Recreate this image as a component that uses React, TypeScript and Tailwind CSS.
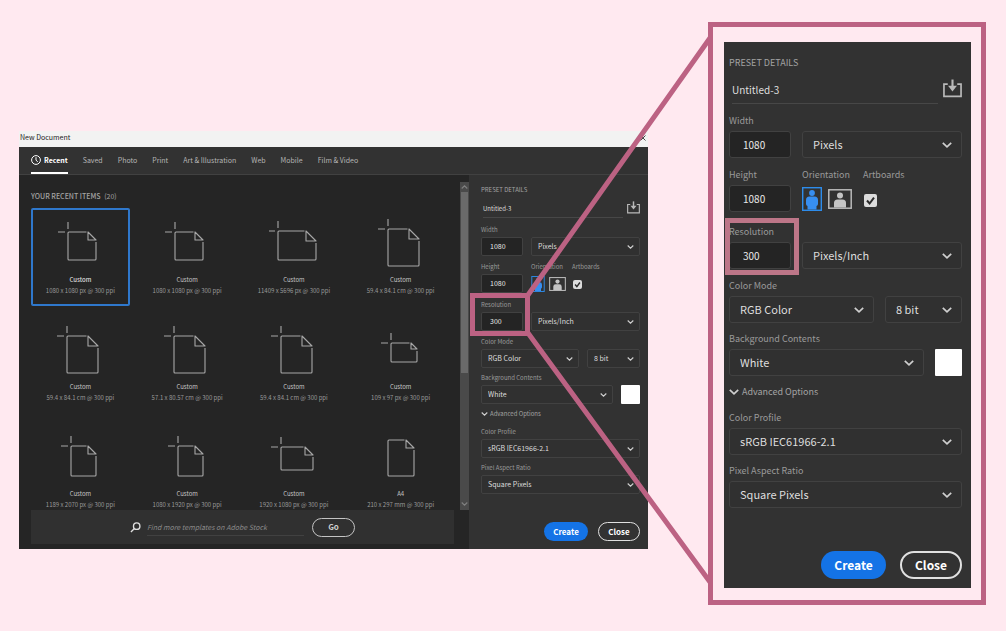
import type { ReactNode } from "react";

type Size = "sm" | "lg";

const tabs = ["Saved", "Photo", "Print", "Art & Illustration", "Web", "Mobile", "Film & Video"];

// x/y/w/h describe the page outline inside a 50x50 icon box
const items = [
  { name: "Custom", dims: "1080 x 1080 px @ 300 ppi", x: 13, y: 14, w: 28, h: 28, fold: 8 },
  { name: "Custom", dims: "1080 x 1080 px @ 300 ppi", x: 13, y: 14, w: 28, h: 28, fold: 8 },
  { name: "Custom", dims: "11409 x 5696 px @ 300 ppi", x: 9, y: 13, w: 38, h: 29, fold: 10 },
  { name: "Custom", dims: "59.4 x 84.1 cm @ 300 ppi", x: 12, y: 11, w: 31, h: 37, fold: 10 },
  { name: "Custom", dims: "59.4 x 84.1 cm @ 300 ppi", x: 12, y: 11, w: 31, h: 37, fold: 10 },
  { name: "Custom", dims: "57.1 x 80.57 cm @ 300 ppi", x: 12, y: 11, w: 31, h: 37, fold: 10 },
  { name: "Custom", dims: "59.4 x 84.1 cm @ 300 ppi", x: 12, y: 11, w: 31, h: 37, fold: 10 },
  { name: "Custom", dims: "109 x 97 px @ 300 ppi", x: 15, y: 18, w: 26, h: 19, fold: 6 },
  { name: "Custom", dims: "1189 x 2070 px @ 300 ppi", x: 16, y: 14, w: 25, h: 30, fold: 8 },
  { name: "Custom", dims: "1080 x 1920 px @ 300 ppi", x: 16, y: 14, w: 25, h: 30, fold: 8 },
  { name: "Custom", dims: "1920 x 1080 px @ 300 ppi", x: 12, y: 15, w: 32, h: 23, fold: 8 },
  { name: "A4", dims: "210 x 297 mm @ 300 ppi", x: 12, y: 8, w: 26, h: 36, fold: 8, plain: true },
];

function PageIcon({ x, y, w, h, fold, plain }: { x: number; y: number; w: number; h: number; fold: number; plain?: boolean }) {
  const r = x + w;
  const b = y + h;
  const f = r - fold;
  return (
    <svg viewBox="0 0 50 50" className="size-[50px]" fill="none" stroke="#a8a8a8" strokeWidth="1.1" strokeLinejoin="round" aria-hidden="true">
      <path d={`M${f - 1.5} ${y}H${x + 1}Q${x} ${y} ${x} ${y + 1}V${b - 1}Q${x} ${b} ${x + 1} ${b}H${r - 1}Q${r} ${b} ${r} ${b - 1}V${y + fold + 2}`} />
      <path d={`M${f} ${y}V${y + fold}H${r}Z`} />
      {!plain && <path d={`M${x} ${y - 10}v7M${x - 10} ${y}h7`} />}
    </svg>
  );
}

function Chevron({ size }: { size: Size }) {
  return (
    <svg viewBox="0 0 10 6" className={size === "lg" ? "h-[6px] w-[10px]" : "h-[4px] w-[7px]"} fill="none" stroke="#cfcfcf" strokeWidth="1.7" aria-hidden="true">
      <path d="M.8 .8 5 4.8 9.2 .8" />
    </svg>
  );
}

function SaveIcon({ size }: { size: Size }) {
  return (
    <svg viewBox="0 0 18 18" className={size === "lg" ? "size-[19px]" : "size-[13px]"} fill="none" stroke="#b9b9b9" strokeWidth="1.6" aria-hidden="true">
      <path d="M4.500 4.800H.9V16.500H17.100V4.800H13.500" />
      <path d="M9 .5V8" strokeWidth="2" />
      <path d="M4.800 6.500h8.400L9 11.800Z" fill="#b9b9b9" stroke="none" />
    </svg>
  );
}

function Portrait({ size }: { size: Size }) {
  return (
    <svg viewBox="0 0 20 24" className={size === "lg" ? "h-[24px] w-[20px]" : "h-[16px] w-[14px]"} aria-hidden="true">
      <rect x=".7" y=".7" width="18.600" height="22.600" fill="none" stroke="#2d8ceb" strokeWidth="1.400" />
      <circle cx="10" cy="6" r="2.900" fill="#378ef0" />
      <path d="M7.500 9.500h5q3.500 0 3.500 3.500v4q0 1.500-1.500 2v3.500h-9V19Q4 18.500 4 17v-4q0-3.500 3.500-3.500Z" fill="#378ef0" />
    </svg>
  );
}

function Landscape({ size }: { size: Size }) {
  return (
    <svg viewBox="0 0 24 20" className={size === "lg" ? "h-[20px] w-[24px]" : "h-[14px] w-[17px]"} aria-hidden="true">
      <rect x=".8" y=".8" width="22.400" height="18.400" fill="none" stroke="#b9b9b9" strokeWidth="1.500" />
      <circle cx="12" cy="6.500" r="3" fill="#c4c4c4" />
      <path d="M9.500 10.500h5q3.500 0 3.500 3.500V18.500H6V14q0-3.500 3.500-3.500Z" fill="#c4c4c4" />
    </svg>
  );
}

function Label({ size, htmlFor, children }: { size: Size; htmlFor?: string; children: ReactNode }) {
  return (
    <label
      htmlFor={htmlFor}
      className={`block whitespace-nowrap text-[#9a9a9a] ${size === "lg" ? "mb-[3px] h-4 text-[9px] leading-[18px]" : "mb-[2px] h-3 text-[6px] leading-[14px]"}`}
    >
      {children}
    </label>
  );
}

function NumberField({ id, size, value }: { id: string; size: Size; value: string }) {
  return (
    <input
      id={id}
      defaultValue={value}
      className={`block border border-[#414141] bg-[#242424] text-[#e8e8e8] outline-none ${
        size === "lg" ? "h-[27px] w-[62px] rounded-[3px] pb-px pl-[13px] text-[10px]" : "h-[19px] w-[42px] rounded-[2px] pb-px pl-2 text-[7px]"
      }`}
    />
  );
}

function SelectField({ id, label, size, value }: { id: string; label?: string; size: Size; value: string }) {
  return (
    <div className="relative min-w-0 flex-1">
      <select
        id={id}
        aria-label={label}
        className={`block w-full appearance-none border border-[#414141] bg-[#303030] text-[#dedede] outline-none ${
          size === "lg" ? "h-[27px] rounded-[3px] pl-[10px] text-[11px]" : "h-[19px] rounded-[2px] pl-[6px] text-[7px]"
        }`}
      >
        <option>{value}</option>
      </select>
      <span className={`pointer-events-none absolute inset-y-0 flex items-center ${size === "lg" ? "right-[10px]" : "right-[6px]"}`}>
        <Chevron size={size} />
      </span>
    </div>
  );
}

function PresetDetails({ size }: { size: Size }) {
  const lg = size === "lg";
  const id = (name: string) => `${size}-${name}`;
  const group = lg ? "mt-2" : "mt-1";
  const row = lg ? "flex items-end gap-[11px]" : "flex items-end gap-2";

  return (
    <form className={`bg-[#323232] ${lg ? "pt-3 pr-[9px] pb-[9px] pl-[5px]" : "pt-2 pr-2 pb-2 pl-3"}`} onSubmit={(e) => e.preventDefault()}>
      <h2 className={`text-[#a3a3a3] ${lg ? "h-4 text-[9px] leading-[18px]" : "h-3 text-[6px] leading-[14px]"}`}>PRESET DETAILS</h2>

      <div className={`flex items-start ${lg ? "mt-[6px] ml-[3px] gap-[5px]" : "mt-[5px] ml-[2px] gap-1"}`}>
        <input
          aria-label="Document name"
          defaultValue="Untitled-3"
          className={`min-w-0 flex-1 border-b border-[#474747] text-[#dedede] outline-none ${lg ? "h-7 pb-px text-[10px]" : "h-[18px] pb-px text-[6px]"}`}
        />
        <button type="button" aria-label="Save preset" className={lg ? "pt-[3px]" : "pt-px"}>
          <SaveIcon size={size} />
        </button>
      </div>

      <div className={`${lg ? "mt-2" : "mt-[5px]"} ${row}`}>
        <div>
          <Label size={size} htmlFor={id("width")}>Width</Label>
          <NumberField id={id("width")} size={size} value="1080" />
        </div>
        <SelectField id={id("unit")} label="Width unit" size={size} value="Pixels" />
      </div>

      <div className={`${group} flex ${lg ? "gap-[11px]" : "gap-2"}`}>
        <div>
          <Label size={size} htmlFor={id("height")}>Height</Label>
          <NumberField id={id("height")} size={size} value="1080" />
        </div>
        <div className={lg ? "w-[50px]" : "w-[33px]"}>
          <Label size={size}>Orientation</Label>
          <div className={`flex items-center ${lg ? "h-[27px] gap-[6px]" : "h-[19px] gap-1"}`}>
            <button type="button" aria-label="Portrait" aria-pressed="true"><Portrait size={size} /></button>
            <button type="button" aria-label="Landscape" aria-pressed="false"><Landscape size={size} /></button>
          </div>
        </div>
        <div>
          <Label size={size} htmlFor={id("artboards")}>Artboards</Label>
          <div className={`flex items-center ${lg ? "h-[27px] pt-1 pl-px" : "h-[19px] pt-px pl-px"}`}>
            <span className={`relative ${lg ? "size-[13px]" : "size-[9px]"}`}>
              <input id={id("artboards")} type="checkbox" defaultChecked className="peer block size-full appearance-none rounded-[2px] bg-[#dcdcdc]" />
              <svg viewBox="0 0 13 13" className="pointer-events-none absolute inset-0 hidden size-full peer-checked:block" fill="none" stroke="#2a2a2a" strokeWidth="2" aria-hidden="true">
                <path d="M3 6.500 5.600 9.500 10 3.600" />
              </svg>
            </span>
          </div>
        </div>
      </div>

      <div className={`${lg ? "mt-[11px]" : "mt-[5px]"} ${row}`}>
        <div className="relative">
          <Label size={size} htmlFor={id("resolution")}>Resolution</Label>
          <NumberField id={id("resolution")} size={size} value="300" />
          <span
            className={`pointer-events-none absolute border-[5px] ${
              lg ? "-top-[5px] -left-1 h-[57px] w-[74px] border-[#bd7688]" : "-top-[5px] -left-[11px] h-[43px] w-[60px] border-[#bc6283]"
            }`}
          />
        </div>
        <SelectField id={id("resolution-unit")} label="Resolution unit" size={size} value="Pixels/Inch" />
      </div>

      <div className={group}>
        <Label size={size} htmlFor={id("mode")}>Color Mode</Label>
        <div className={row}>
          <SelectField id={id("mode")} size={size} value="RGB Color" />
          <div className={`flex ${lg ? "w-[77px]" : "w-[53px]"}`}>
            <SelectField id={id("depth")} label="Bit depth" size={size} value="8 bit" />
          </div>
        </div>
      </div>

      <div className={lg ? "mt-[7px]" : "mt-[3px]"}>
        <Label size={size} htmlFor={id("background")}>Background Contents</Label>
        <div className={row}>
          <SelectField id={id("background")} size={size} value="White" />
          <button type="button" aria-label="Background color" className={`rounded-[1px] bg-white ${lg ? "size-[27px]" : "size-[19px]"}`} />
        </div>
      </div>

      <button
        type="button"
        className={`${group} flex items-center text-[#a3a3a3] ${lg ? "h-4 gap-[3px] text-[9px] leading-4" : "h-3 gap-[2px] text-[6px] leading-3"}`}
      >
        <Chevron size={size} />
        Advanced Options
      </button>

      <div className={lg ? "mt-[9px]" : "mt-[5px]"}>
        <Label size={size} htmlFor={id("profile")}>Color Profile</Label>
        <SelectField id={id("profile")} size={size} value="sRGB IEC61966-2.1" />
      </div>

      <div className={lg ? "mt-[7px]" : "mt-[3px]"}>
        <Label size={size} htmlFor={id("ratio")}>Pixel Aspect Ratio</Label>
        <SelectField id={id("ratio")} size={size} value="Square Pixels" />
      </div>

      <div className={`flex justify-end font-bold text-white ${lg ? "mt-[43px] gap-[14px] text-[12px]" : "mt-7 gap-[10px] text-[8px]"}`}>
        <button type="submit" className={`rounded-full bg-[#1473e6] ${lg ? "h-7 w-[65px]" : "h-[19px] w-[44px]"}`}>Create</button>
        <button type="button" className={`rounded-full border-[#e0e0e0] ${lg ? "h-7 w-[62px] border-2" : "h-[19px] w-[42px] border"}`}>Close</button>
      </div>
    </form>
  );
}

function RecentItems() {
  return (
    <section className="flex min-w-0 flex-1 flex-col bg-[#252525]">
      <div className="flex h-[335px] overflow-hidden">
        <div className="min-w-0 flex-1 pt-[15px] pr-[10px] pl-3">
          <h2 className="text-[7px] leading-3 font-medium text-[#a3a3a3]">
            YOUR RECENT ITEMS <span className="ml-[2px] font-normal">(20)</span>
          </h2>
          <div className="mt-[6px] grid grid-cols-4 gap-x-2 gap-y-[9px]">
            {items.map((item, i) => (
              <button
                key={i}
                className={`flex h-[98px] flex-col items-center rounded-[2px] border-2 pt-2 whitespace-nowrap ${i === 0 ? "border-[#2f78cc]" : "border-transparent"}`}
              >
                <PageIcon {...item} />
                <span className={`mt-[7px] text-[6px] leading-[10px] ${i === 0 ? "font-medium text-[#dedede]" : "text-[#c4c4c4]"}`}>{item.name}</span>
                <span className="text-[6px] leading-3 text-[#9a9a9a]">{item.dims}</span>
              </button>
            ))}
          </div>
        </div>
        <div className="mt-[7px] flex w-[9px] flex-col items-center bg-[#4a4a4a]">
          <span className="flex h-[10px] rotate-180 items-center opacity-40"><Chevron size="sm" /></span>
          <span className="h-[181px] w-[7px] bg-[#6a6a6a]" />
          <span className="mt-auto flex h-[12px] items-center opacity-40"><Chevron size="sm" /></span>
        </div>
      </div>
      <form className="mr-[15px] mb-[5px] ml-3 flex h-[34px] items-center justify-center bg-[#303030]" onSubmit={(e) => e.preventDefault()}>
        <svg viewBox="0 0 12 12" className="size-[11px]" fill="none" stroke="#e0e0e0" strokeWidth="1.5" aria-hidden="true">
          <circle cx="7.300" cy="4.500" r="3.500" />
          <path d="M4.800 7.200 1 11" />
        </svg>
        <input
          aria-label="Find more templates on Adobe Stock"
          placeholder="Find more templates on Adobe Stock"
          className="ml-[6px] h-[18px] w-[157px] border-b border-[#414141] text-[7px] italic outline-none placeholder:text-[#8a8a8a]"
        />
        <button className="ml-2 h-[19px] w-[43px] rounded-full border border-[#c4c4c4] text-[8px] font-bold text-[#cfcfcf]">Go</button>
      </form>
    </section>
  );
}

function NewDocumentWindow() {
  return (
    <div className="mt-[109px] min-w-0 flex-1">
      <header className="flex h-4 items-center justify-between bg-[#f2f2f2] pr-[2px] pb-[3px] pl-px text-[7px] text-[#222]">
        <h1>New Document</h1>
        <button aria-label="Close window">
          <svg viewBox="0 0 6 6" className="size-[6px]" stroke="#333" strokeWidth=".9" aria-hidden="true">
            <path d="M.5 .5 5.500 5.500M5.500 .5 .5 5.500" />
          </svg>
        </button>
      </header>
      <nav className="flex h-7 gap-[15px] border-b border-[#414141] bg-[#323232] pl-3 text-[7px] whitespace-nowrap text-[#b5b5b5]">
        <a href="#recent" className="flex items-center gap-[3px] border-b-2 border-white pt-px font-bold text-white">
          <svg viewBox="0 0 10 10" className="size-[10px]" fill="none" stroke="currentColor" aria-hidden="true">
            <circle cx="5" cy="5" r="4.400" />
            <path d="M5 2.200V5.200L6.800 6.800" />
          </svg>
          Recent
        </a>
        {tabs.map((tab) => (
          <a key={tab} href="#tab" className="flex items-center border-b-2 border-transparent pt-px">{tab}</a>
        ))}
      </nav>
      <div className="flex">
        <RecentItems />
        <div className="w-[179px] shrink-0">
          <PresetDetails size="sm" />
        </div>
      </div>
    </div>
  );
}

export default function App() {
  return (
    <main className="flex min-h-screen items-start gap-[60px] bg-[#ffe9f0] pt-[22px] pr-5 pl-[19px] font-['Noto_Sans_CJK_SC','Noto_Sans',sans-serif]">
      <NewDocumentWindow />
      <div className="relative w-[278px] shrink-0">
        {/* lines that lead from the resolution box to the enlarged panel */}
        <svg viewBox="0 0 182 583" className="pointer-events-none absolute top-0 right-full h-[583px] w-[182px] overflow-visible" stroke="#bc6283" strokeWidth="5" aria-hidden="true">
          <path d="M2 273 184 16M2 311 184 560" />
        </svg>
        <div className="relative border-[5px] border-[#bc6283] bg-[#ffe9f0] pt-[15px] pr-[10px] pb-3 pl-[11px]">
          <PresetDetails size="lg" />
        </div>
      </div>
    </main>
  );
}
